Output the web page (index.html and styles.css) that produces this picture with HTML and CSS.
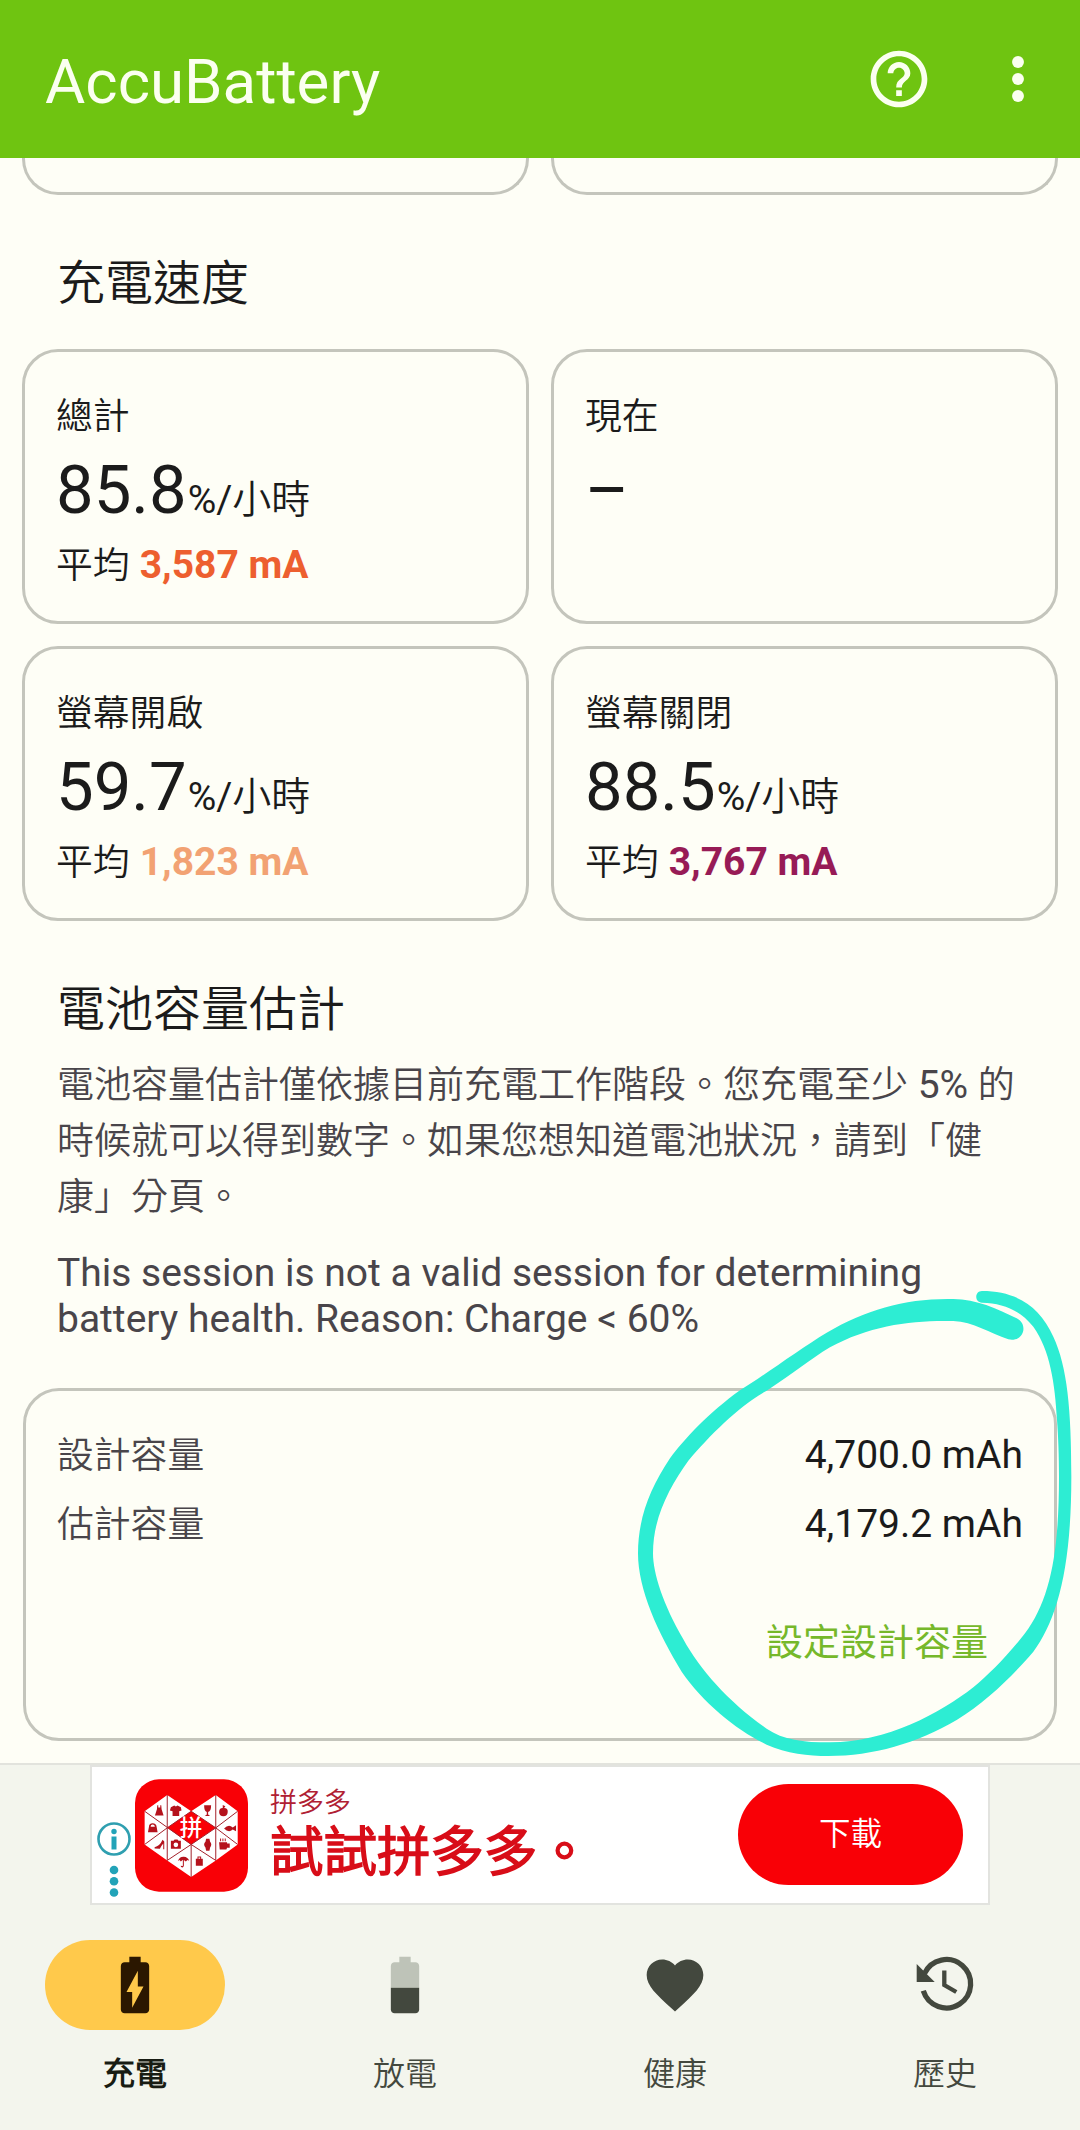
FILE: index.html
```html
<!DOCTYPE html>
<html lang="zh-Hant">
<head>
  <meta charset="UTF-8" />
  <meta name="viewport" content="width=device-width, initial-scale=1.0"/>
  <title>AccuBattery</title>
  <link rel="stylesheet" href="styles.css">
</head>
<body>
  <header class="toolbar">
    <h1>AccuBattery</h1>
    <svg class="icon help" viewBox="0 0 24 24"><path d="M11 18h2v-2h-2v2zm1-16C6.48 2 2 6.48 2 12s4.480 10 10 10 10-4.480 10-10S17.520 2 12 2zm0 18c-4.410 0-8-3.590-8-8s3.590-8 8-8 8 3.590 8 8-3.590 8-8 8zm0-14c-2.210 0-4 1.790-4 4h2c0-1.100.9-2 2-2s2 .9 2 2c0 2-3 1.750-3 5h2c0-2.250 3-2.500 3-5 0-2.210-1.790-4-4-4z"/></svg>
    <svg class="icon" viewBox="0 0 24 24"><circle cx="12" cy="6" r="2.100"/><circle cx="12" cy="12" r="2.100"/><circle cx="12" cy="18" r="2.100"/></svg>
  </header>

  <main>
    <div class="cards previous">
      <div class="card"></div>
      <div class="card"></div>
    </div>

    <h2>充電速度</h2>
    <div class="cards">
      <div class="card">
        <div class="label">總計</div>
        <div class="value">85.8<span>%/小時</span></div>
        <div class="average">平均 <b class="orange">3,587 mA</b></div>
      </div>
      <div class="card">
        <div class="label">現在</div>
        <div class="value">–</div>
      </div>
      <div class="card">
        <div class="label">螢幕開啟</div>
        <div class="value">59.7<span>%/小時</span></div>
        <div class="average">平均 <b class="peach">1,823 mA</b></div>
      </div>
      <div class="card">
        <div class="label">螢幕關閉</div>
        <div class="value">88.5<span>%/小時</span></div>
        <div class="average">平均 <b class="purple">3,767 mA</b></div>
      </div>
    </div>

    <h2 class="capacity-title">電池容量估計</h2>
    <p class="about">電池容量估計僅依據目前充電工作階段。您充電至少<span> 5% </span>的<br>時候就可以得到數字。如果您想知道電池狀況，請到「健<br>康」分頁。</p>
    <p class="session">This session is not a valid session for determining<br>battery health. Reason: Charge &lt; 60%</p>

    <div class="card capacity">
      <div class="row"><span>設計容量</span><strong>4,700.0 mAh</strong></div>
      <div class="row"><span>估計容量</span><strong>4,179.2 mAh</strong></div>
      <div class="action">設定設計容量</div>
    </div>
  </main>

  <footer>
    <div class="ad">
      <svg class="ad-info" viewBox="0 0 36 68">
        <circle cx="18" cy="18" r="15.500" fill="none" stroke="#2f9fb0" stroke-width="2.600"/>
        <circle cx="18" cy="10.500" r="2.700"/>
        <path d="M15.500 15.500h5v13h-5z"/>
        <circle cx="18" cy="49" r="4.300"/><circle cx="18" cy="60.300" r="4.300"/><circle cx="18" cy="71.500" r="4.300"/>
      </svg>
      <svg class="ad-logo" viewBox="45 26 340 338">
        <rect x="45" y="26" width="340" height="338" rx="72" fill="#f90006"/>
        <path d="M74 122 142 73l72 49 74-49 66 49v100l-66 48-74 50-72-50-68-48z" fill="#fff"/>
        <path d="M142 172l72-50 74 50-74 50z" fill="#f90006"/>
        <path d="M142 73v197M288 73v197M74 122l140 100v98M74 222l68-50 72-50M354 122l-66 50-74-50M354 222l-66-50M142 270l72-48 74 48M214 222l74-50" fill="none" stroke="#a3202a" stroke-width="3"/>
        <text x="214" y="197" text-anchor="middle">拼</text>
        <g fill="#b5121c">
          <path d="M112 104h3v7h6v-7h3l1 12 6 19h-26l6-19z"/>
          <path d="M153 110l10-5q5 5 10 0l10 5 2 10-7 2v14h-20v-14l-8-2z"/>
          <path d="M253 104h21q0 19-9 20v8l6 4h-16l6-4v-8q-8-1-8-20z"/>
          <path d="M309 103l8 4-4 5q12 0 11 12-1 13-13 13-12 0-13-12 0-13 11-13z"/>
          <path d="M87 169q0-11 11-11t12 11l3 16H84zM92 169h13q-1-7-7-7t-6 7z" fill-rule="evenodd"/>
          <path d="M313 174q14-15 26-3l10-7v18l-10-5q-12 11-26-3z"/>
          <path d="M128 208l5 5v23h-3v-17q-7 8-10 16l-16-1v-4q15-2 24-22z"/>
          <path d="M153 211h8l3-4h9l3 4h7v24h-30zM161 223a7 7 0 1 0 14 0 7 7 0 1 0-14 0z" fill-rule="evenodd"/>
          <path d="M259 205h10l2 9q7 8 0 17l-2 10h-10l-2-10q-8-9 0-17z"/>
          <path d="M298 215h24v4h8v13h-8l-2 5h-20zM301 204h3v8h-3zM308 204h3v8h-3zM315 204h3v8h-3z"/>
          <path d="M174 272q5-14 18-13 12 1 16 12l-5-2-5 4-6-4v17q-2 8-9 3v-4q5 4 6 0v-17l-6 5-4-4z"/>
          <path d="M228 265h5v-7h11v7h5v21h-21zM236 261v4h5v-4z" fill-rule="evenodd"/>
        </g>
      </svg>
      <div class="ad-text">
        <div class="ad-name">拼多多</div>
        <div class="ad-title">試試拼多多。</div>
      </div>
      <div class="ad-button">下載</div>
    </div>

    <nav>
      <div class="tab active">
        <div class="pill"><svg class="icon" viewBox="0 0 24 24"><path d="M15.670 4H14V2h-4v2H8.330C7.600 4 7 4.600 7 5.330v15.330C7 21.400 7.600 22 8.330 22h7.330c.740 0 1.340-.600 1.340-1.330V5.330C17 4.600 16.400 4 15.670 4zM11 20v-5.500H9L13 7v5.500h2L11 20z"/></svg></div>
        <span>充電</span>
      </div>
      <div class="tab">
        <div class="pill"><svg class="icon" viewBox="0 0 24 24"><path d="M17 5.330C17 4.600 16.400 4 15.670 4H14V2h-4v2H8.330C7.600 4 7 4.600 7 5.330V13h10z" fill="#bec3b8"/><path d="M7 13v7.670C7 21.400 7.600 22 8.330 22h7.340c.730 0 1.330-.600 1.330-1.330V13z"/></svg></div>
        <span>放電</span>
      </div>
      <div class="tab">
        <div class="pill"><svg class="icon" viewBox="0 0 24 24"><path d="M12 21.350l-1.450-1.320C5.400 15.360 2 12.280 2 8.500 2 5.420 4.420 3 7.500 3c1.740 0 3.410.810 4.500 2.090C13.090 3.810 14.760 3 16.500 3 19.580 3 22 5.420 22 8.500c0 3.780-3.400 6.860-8.550 11.540z"/></svg></div>
        <span>健康</span>
      </div>
      <div class="tab">
        <div class="pill"><svg class="icon" viewBox="0 0 68 68"><path d="M5.700 13v18h18z"/><path d="M13.500 22.500A24.200 24.200 0 1 1 12.300 39.800" fill="none" stroke="#43483e" stroke-width="5.300"/><path d="M33.300 19.500V34l12 7" fill="none" stroke="#43483e" stroke-width="4.300"/></svg></div>
        <span>歷史</span>
      </div>
    </nav>
  </footer>

  <!-- hand-drawn circle around the capacity numbers -->
  <svg class="marker" viewBox="0 0 1380 1500">
    <path d="M1190 145C1130 115 1070 88 1000 87C860 84 740 118 620 188C540 236 430 318 360 361C270 425 190 510 150 565C90 655 54 745 54 850C54 960 115 1090 185 1205C250 1300 350 1380 440 1424C500 1450 565 1458 625 1458C760 1458 890 1420 1010 1350C1100 1295 1180 1215 1240 1145C1310 1050 1354 900 1354 620C1354 420 1342 290 1300 200C1260 110 1190 63 1086 63C1063 63 1063 98 1086 98C1150 100 1200 120 1240 170C1290 240 1305 340 1311 450C1315 500 1317 560 1317 620C1317 850 1290 990 1215 1090C1160 1160 1110 1210 1060 1252C960 1330 800 1417 630 1417C550 1417 490 1410 440 1376C330 1300 240 1200 190 1108C130 1005 99 910 99 850C99 740 150 650 205 572C270 495 360 405 440 362C520 310 570 268 630 232C750 165 880 150 1000 153C1060 155 1110 190 1165 208C1212 218 1226 162 1190 145Z"/>
  </svg>
</body>
</html>
```
FILE: styles.css
```css
* {
  box-sizing: border-box;
}
body {
  margin: 0;
  width: 1080px;
  height: 2130px;
  position: relative;
  display: flex;
  flex-direction: column;
  overflow: hidden;
  background: #fefef6;
  color: #1b1b1b;
  font-family: Roboto, "Noto Sans CJK TC DemiLight", "Noto Sans CJK TC", sans-serif;
  font-size: 37px;
}
h1, h2, p {
  margin: 0;
  font-weight: 400;
}
.icon {
  width: 68px;
  height: 68px;
  display: block;
  fill: currentColor;
}

/* toolbar */
.toolbar {
  height: 158px;
  flex: none;
  display: flex;
  align-items: center;
  padding: 0 28px 0 45px;
  background: #6fc411;
  color: #fbfff0;
}
.toolbar h1 {
  flex: 1;
  font-size: 61.8px;
  line-height: 72px;
  padding-top: 6px;
}
.help {
  margin-right: 51px;
}

/* content */
main {
  flex: 1;
  padding: 0 22px;
}
.cards {
  display: grid;
  grid-template-columns: 1fr 1fr;
  grid-auto-rows: 275px;
  gap: 22px;
}
.card {
  border: 3px solid #c4c5bc;
  border-radius: 36px;
  padding: 37px 31px 0;
}
.previous {
  grid-auto-rows: 37px;
}
.previous .card {
  border-top: 0;
  border-radius: 0 0 36px 36px;
  padding: 0;
}
h2 {
  font-size: 48px;
  line-height: 60px;
  padding-left: 35px;
  margin: 59px 0 35px;
}
.label, .average {
  font-size: 36.8px;
  line-height: 56px;
}
.value {
  font-size: 67px;
  line-height: 74px;
  margin: 8px 0 11px;
}
.value span {
  font-size: 39px;
  line-height: 1;
  margin-left: 1px;
}
.average b {
  font-size: 39px;
  line-height: 1;
  margin-left: 1px;
}
.orange { color: #ed5f2f; }
.peach { color: #f2a273; }
.purple { color: #971b56; }

.capacity-title {
  margin-bottom: 18px;
}
.about, .session {
  padding-left: 35px;
  color: #49454a;
  white-space: nowrap;
}
.about {
  line-height: 56px;
}
.about span {
  font-size: 39px;
  line-height: 1;
}
.session {
  margin-top: 24px;
  font-size: 39px;
  line-height: 46px;
}
.capacity {
  height: 353px;
  margin: 46px 1px 0;
  padding: 29px 31px 0;
}
.row {
  display: flex;
  justify-content: space-between;
  height: 69px;
  line-height: 69px;
  padding-top: 1px;
  color: #49454a;
}
.row span {
  font-size: 36.8px;
}
.row strong {
  font-size: 39px;
  font-weight: 400;
  color: #1b1b1b;
}
.action {
  margin-top: 51px;
  padding-right: 35px;
  text-align: right;
  font-family: Roboto, "Noto Sans CJK TC", sans-serif;
  font-size: 37px;
  line-height: 70px;
  color: #76b82a;
}

/* ad banner and tabs */
footer {
  height: 367px;
  flex: none;
  border-top: 2px solid #e2e3dd;
  background: #f3f5ed;
}
.ad {
  width: 900px;
  height: 140px;
  margin: 0 auto;
  display: flex;
  border: 2px solid #e2e3df;
  background: #fff;
}
.ad-info {
  width: 36px;
  height: 68px;
  margin: 54px 3px 0 4px;
  overflow: visible;
  fill: #22a3b8;
}
.ad-logo {
  width: 113px;
  height: 113px;
  margin-top: 12px;
}
.ad-logo text {
  font-family: "Noto Sans CJK TC", sans-serif;
  font-size: 68px;
  font-weight: 500;
  fill: #fff;
}
.ad-text {
  flex: 1;
  margin-left: 22px;
  padding-top: 18px;
}
.ad-name {
  font-size: 27px;
  line-height: 36px;
  color: #b02033;
}
.ad-title {
  font-size: 53.5px;
  line-height: 64px;
  font-weight: 700;
  color: #d80d18;
}
.ad-button {
  width: 225px;
  height: 101px;
  margin: 17px 25px 0 0;
  border-radius: 51px;
  background: #f90006;
  color: #fff;
  font-size: 31.5px;
  line-height: 101px;
  text-align: center;
}
nav {
  display: flex;
  padding-top: 35px;
}
.tab {
  flex: 1;
  display: flex;
  flex-direction: column;
  align-items: center;
  color: #43483e;
  font-size: 32px;
  line-height: 48px;
}
.pill {
  width: 180px;
  height: 90px;
  margin-bottom: 20px;
  display: flex;
  align-items: center;
  justify-content: center;
  border-radius: 45px;
}
.active .pill {
  background: #ffc94b;
  color: #2b1700;
}
.active span {
  color: #181c13;
  font-weight: 700;
}

.marker {
  position: absolute;
  left: 620px;
  top: 1270px;
  width: 460px;
  height: 500px;
  fill: #2dedd3;
}
```
